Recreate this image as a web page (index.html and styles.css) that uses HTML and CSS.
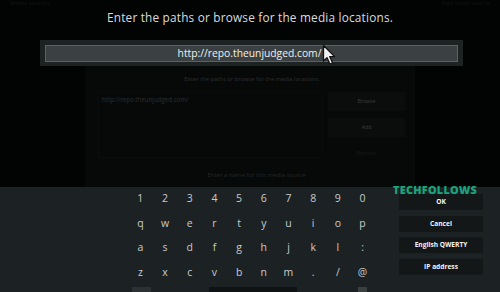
FILE: index.html
```html
<!DOCTYPE html>
<html>
<head>
<meta charset="utf-8">
<link rel="stylesheet" href="styles.css">
</head>
<body>
<div class="screen">
  <div class="top-faint">
    <span class="tf-left">Media sources</span>
    <span class="tf-right">Add video source</span>
  </div>
  <h1 class="title">Enter the paths or browse for the media locations.</h1>
  <div class="input-bar">
    <div class="input-field">http://repo.theunjudged.com/</div>
  </div>
  <div class="bg-dialog">
    <div class="bg-heading">Enter the paths or browse for the media locations.</div>
    <div class="bg-body">
      <div class="bg-list">
        <div class="bg-item">http://repo.theunjudged.com/</div>
      </div>
      <div class="bg-buttons">
        <div class="bg-btn">Browse</div>
        <div class="bg-btn">Add</div>
        <div class="bg-btn dim">Remove</div>
      </div>
    </div>
    <div class="bg-foot">Enter a name for this media source</div>
  </div>
  <div class="keyboard">
    <div class="keys">
      <span>1</span><span>2</span><span>3</span><span>4</span><span>5</span><span>6</span><span>7</span><span>8</span><span>9</span><span>0</span>
      <span>q</span><span>w</span><span>e</span><span>r</span><span>t</span><span>y</span><span>u</span><span>i</span><span>o</span><span>p</span>
      <span>a</span><span>s</span><span>d</span><span>f</span><span>g</span><span>h</span><span>j</span><span>k</span><span>l</span><span>:</span>
      <span>z</span><span>x</span><span>c</span><span>v</span><span>b</span><span>n</span><span>m</span><span>.</span><span>/</span><span>@</span>
      <span class="k-wide1"></span><span class="k-space"></span><span class="k-mark"></span>
    </div>
    <div class="actions">
      <div class="act">OK</div>
      <div class="act">Cancel</div>
      <div class="act">English QWERTY</div>
      <div class="act">IP address</div>
    </div>
  </div>
  <div class="watermark">TECHFOLLOWS</div>
  <svg class="cursor" width="16" height="22" viewBox="0 0 16 22">
    <path d="M1.5 1.5 L1.5 17 L5 13.6 L8 20.2 L10.6 19 L7.7 12.6 L12.6 12.6 Z" fill="#f2f2f2" stroke="#111" stroke-width="1.3" stroke-linejoin="round"/>
  </svg>
</div>
</body>
</html>
```

FILE: styles.css
```css
* { box-sizing: border-box; }
html, body { margin: 0; padding: 0; background: #020303; }
body { width: 500px; height: 292px; overflow: hidden; font-family: "Open Sans", "Noto Sans", sans-serif; }
.screen { position: relative; width: 500px; height: 292px; background: #020303; overflow: hidden; display: flex; flex-direction: column; }
.screen > * { flex-shrink: 0; }

.top-faint { position: absolute; top: 0; left: 0; right: 0; display: flex; justify-content: space-between; padding: 0 10px; font-size: 6px; line-height: 7px; color: #131515; }

.title { margin: 0; padding-top: 9px; height: 25px; line-height: 16px; text-align: center; font-size: 11.8px; font-weight: 400; color: #dcdcdc; letter-spacing: 0.2px; }

.input-bar { margin: 15px 37px 0 40px; height: 26px; padding: 5px; background: #1d2222; }
.input-field { height: 17px; background: #3b4042; border: 1px solid #5c6162; color: #f0f0f0; font-size: 10.3px; line-height: 15px; text-align: center; padding-right: 4px; }

.bg-dialog { margin: 0 85px; height: 121px; background: #070909; display: flex; flex-direction: column; padding: 8px 10px 0 13px; }
.bg-heading { font-size: 5.8px; line-height: 10px; text-align: center; color: #2e3030; padding-left: 1px; }
.bg-body { display: flex; margin-top: 8px; height: 66px; }
.bg-list { flex: 1; border: 1px solid #0a0c0c; padding: 2px 3px; }
.bg-item { font-size: 6.2px; color: #2c2f2f; }
.bg-buttons { width: 82px; display: flex; flex-direction: column; gap: 7px; padding-left: 5px; }
.bg-btn { height: 19px; background: #0b0d0d; color: #3a3c3c; font-size: 5.2px; line-height: 19px; text-align: center; }
.bg-btn.dim { background: transparent; color: #161919; }
.bg-foot { margin-top: 13px; text-align: center; font-size: 6px; color: #252828; padding-left: 10px; }

.keyboard { height: 105px; overflow: hidden; background: #1c2224; display: flex; }
.keys { margin-left: 128px; width: 247px; display: grid; grid-template-columns: repeat(10, 24.7px); grid-auto-rows: 24.6px; margin-top: -1px; }
.keys span { text-align: center; font-size: 10.5px; line-height: 24.6px; color: #c8cbcb; }
.keys .k-wide1 { grid-column: 1 / span 1; margin: 3px 2px 0 4px; background: #2c3234; }
.keys .k-space { grid-column: 4 / span 4; margin: 3px 4px 0 7px; background: #101314; }
.keys .k-mark { grid-column: 10 / span 1; margin: 3px 8px 0 8px; background: #3a3f40; }
.actions { margin-left: 24px; margin-top: 7px; width: 84px; display: flex; flex-direction: column; gap: 5.5px; }
.act { height: 16px; background: #131718; color: #f4f4f4; font-size: 6.6px; font-weight: 700; line-height: 16px; text-align: center; }

.watermark { position: absolute; left: 393px; top: 183px; font-size: 10.8px; font-weight: 800; color: #1aa47d; letter-spacing: 0.3px; line-height: 14px; }
.cursor { position: absolute; left: 322px; top: 44px; }
```
